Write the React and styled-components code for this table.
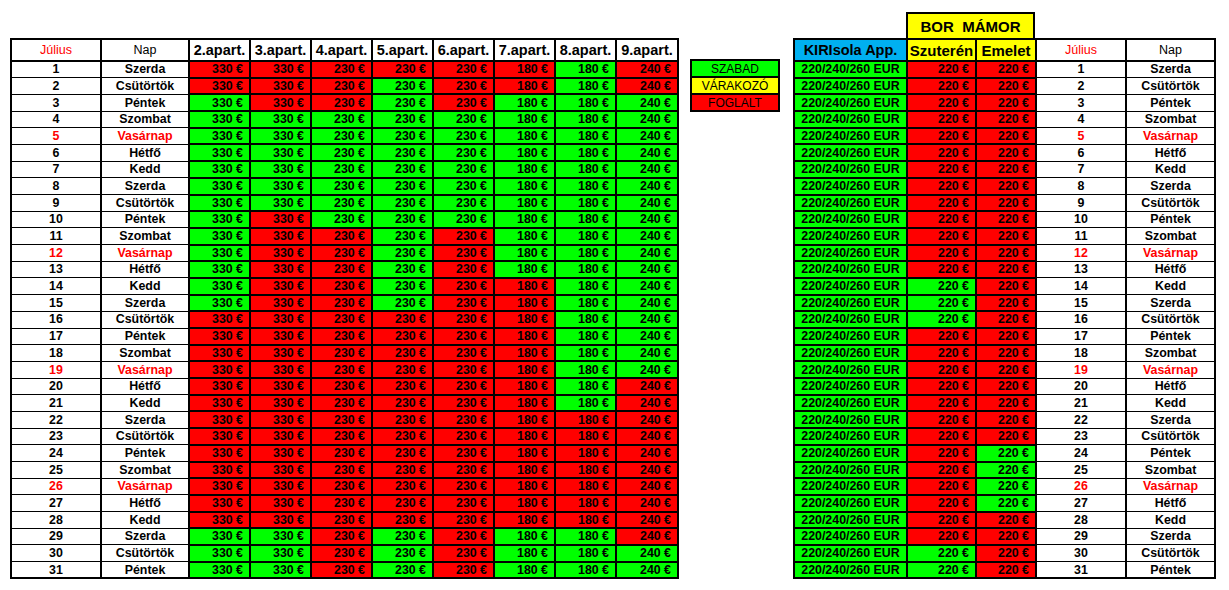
import React from "react";
import styled, { createGlobalStyle } from "styled-components";

const GlobalStyle = createGlobalStyle`
  body {
    margin: 0;
    background: #fff;
    font-family: "Liberation Sans", Arial, sans-serif;
  }
`;

const FILL = { G: "#00ff00", R: "#ff0000", Y: "#ffff00", B: "#00b0f0", W: "#ffffff" };

const DAYS = ["Szerda", "Csütörtök", "Péntek", "Szombat", "Vasárnap", "Hétfő", "Kedd"];

const APARTS = [
  { name: "2.apart.", price: "330 €" },
  { name: "3.apart.", price: "330 €" },
  { name: "4.apart.", price: "230 €" },
  { name: "5.apart.", price: "230 €" },
  { name: "6.apart.", price: "230 €" },
  { name: "7.apart.", price: "180 €" },
  { name: "8.apart.", price: "180 €" },
  { name: "9.apart.", price: "240 €" },
];

// one string per day, one letter per apartment (G = szabad, R = foglalt)
const APART_GRID = [
  "RRRRRRGR", "RRRGRRGR", "GRRGRGGG", "GGGGGGGG", "GGGGGGGG", "GGGGGGGG", "GGGGGGGG",
  "GGGGGGGG", "GGGGGGGG", "GRGGGGGG", "GRRGRGGG", "GRRGRGGG", "GRRGRGGG", "GRRGRRGG",
  "GRRGRRGG", "RRRRRRGG", "RRRRRRGG", "RRRRRRGG", "RRRRRRGG", "RRRRRRGR", "RRRRRRGR",
  "RRRRRRRR", "RRRRRRRR", "RRRRRRRR", "RRRRRRRR", "RRRRRRRR", "RRRRRRRR", "RRRRRRRR",
  "GGRGRGGR", "GGRGRGGG", "GGRGRGGG",
];

// Szuterén, Emelet
const BOR_GRID = [
  "RR", "RR", "RR", "RR", "RR", "RR", "RR", "RR", "RR", "RR", "RR", "RR", "RR", "GR",
  "GR", "GR", "RR", "RR", "RR", "RR", "RR", "RR", "RR", "RG", "RG", "RG", "RG", "RR",
  "RR", "GR", "GR",
];

const days = Array.from({ length: 31 }, (_, i) => ({
  n: i + 1,
  name: DAYS[i % 7],
  sunday: i % 7 === 4,
}));

const Sheet = styled.div`
  display: flex;
  align-items: flex-start;
  padding: 12px 0 0 10px;
`;

const Table = styled.table`
  border-collapse: collapse;
  table-layout: fixed;
  border: 2px solid #000;
  color: #000;
  margin-top: ${(p) => p.$top || 0}px;
`;

const HeadRow = styled.tr`
  height: 22px;
`;

const Row = styled.tr`
  height: 16.7px;
`;

const Head = styled.th`
  padding: 0;
  border: 2px solid #000;
  background: ${(p) => FILL[p.$fill || "W"]};
  color: ${(p) => (p.$red ? "#ff0000" : "#000")};
  font-size: ${(p) => p.$size || 14.5}px;
  font-weight: ${(p) => (p.$light ? 400 : 700)};
  text-align: center;
  white-space: nowrap;
  overflow: hidden;
  line-height: 1;
`;

const DayCell = styled.td`
  padding: 0;
  border-top: 1px solid #000;
  border-bottom: 1px solid #000;
  border-left: 2px solid #000;
  border-right: 2px solid #000;
  background: #fff;
  color: ${(p) => (p.$red ? "#ff0000" : "#000")};
  font-size: 12.4px;
  font-weight: 700;
  text-align: center;
  line-height: 1;
  white-space: nowrap;
`;

const PriceCell = styled.td`
  padding: 0 ${(p) => (p.$center ? 0 : 6)}px 0 0;
  border: 2px solid #000;
  background: ${(p) => FILL[p.$fill]};
  font-size: 12.4px;
  font-weight: 700;
  text-align: ${(p) => (p.$center ? "center" : "right")};
  line-height: 1;
  white-space: nowrap;
  overflow: hidden;
`;

const Legend = styled.div`
  display: flex;
  flex-direction: column;
  width: 86px;
  margin: 47px 0 0 11px;
  border: 2px solid #000;
  background: #000;
  gap: 2px;
`;

const LegendItem = styled.div`
  height: 15px;
  display: flex;
  align-items: center;
  justify-content: center;
  background: ${(p) => FILL[p.$fill]};
  font-size: 12px;
  color: #000;
`;

const RightBlock = styled.div`
  display: flex;
  flex-direction: column;
  margin-left: 13px;
`;

const BorBox = styled.div`
  margin-left: 113px;
  width: 125px;
  height: 24px;
  border: 2px solid #000;
  border-bottom: 0;
  background: #ffff00;
  display: flex;
  align-items: center;
  justify-content: center;
  font-size: 15px;
  font-weight: 700;
  white-space: pre;
`;

const DayCols = () => (
  <>
    <col style={{ width: 90 }} />
    <col style={{ width: 88 }} />
  </>
);

export default function App() {
  return (
    <>
      <GlobalStyle />
      <Sheet>
        <Table $top={26}>
          <colgroup>
            <DayCols />
            {APARTS.map((a, i) => (
              <col key={a.name} style={{ width: i === 7 ? 62 : 61 }} />
            ))}
          </colgroup>
          <thead>
            <HeadRow>
              <Head $red $light $size={12.5}>Július</Head>
              <Head $light $size={12.5}>Nap</Head>
              {APARTS.map((a) => (
                <Head key={a.name}>{a.name}</Head>
              ))}
            </HeadRow>
          </thead>
          <tbody>
            {days.map((d, i) => (
              <Row key={d.n}>
                <DayCell $red={d.sunday}>{d.n}</DayCell>
                <DayCell $red={d.sunday}>{d.name}</DayCell>
                {APARTS.map((a, j) => (
                  <PriceCell key={a.name} $fill={APART_GRID[i][j]}>
                    {a.price}
                  </PriceCell>
                ))}
              </Row>
            ))}
          </tbody>
        </Table>

        <Legend>
          <LegendItem $fill="G">SZABAD</LegendItem>
          <LegendItem $fill="Y">VÁRAKOZÓ</LegendItem>
          <LegendItem $fill="R">FOGLALT</LegendItem>
        </Legend>

        <RightBlock>
          <BorBox>{"BOR  MÁMOR"}</BorBox>
          <Table>
            <colgroup>
              <col style={{ width: 113 }} />
              <col style={{ width: 69 }} />
              <col style={{ width: 60 }} />
              <col style={{ width: 90 }} />
              <col style={{ width: 89 }} />
            </colgroup>
            <thead>
              <HeadRow>
                <Head $fill="B">KIRIsola App.</Head>
                <Head $fill="Y" $size={15}>Szuterén</Head>
                <Head $fill="Y" $size={15}>Emelet</Head>
                <Head $red $light $size={12.5}>Július</Head>
                <Head $light $size={12.5}>Nap</Head>
              </HeadRow>
            </thead>
            <tbody>
              {days.map((d, i) => (
                <Row key={d.n}>
                  <PriceCell $fill="G" $center>220/240/260 EUR</PriceCell>
                  <PriceCell $fill={BOR_GRID[i][0]}>220 €</PriceCell>
                  <PriceCell $fill={BOR_GRID[i][1]}>220 €</PriceCell>
                  <DayCell $red={d.sunday}>{d.n}</DayCell>
                  <DayCell $red={d.sunday}>{d.name}</DayCell>
                </Row>
              ))}
            </tbody>
          </Table>
        </RightBlock>
      </Sheet>
    </>
  );
}
